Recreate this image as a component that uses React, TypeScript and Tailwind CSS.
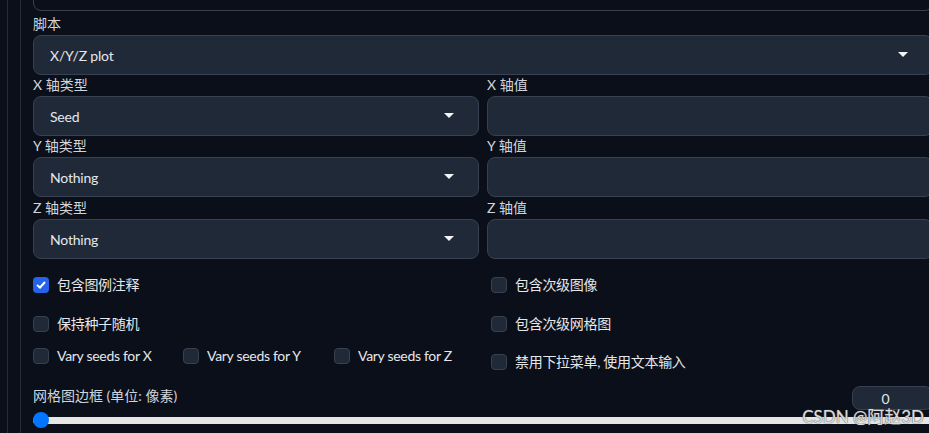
import React from "react";

const font = { fontFamily: '"Lato", "Noto Sans CJK SC", sans-serif' };

function Caret() {
  return (
    <svg width="10" height="6" viewBox="0 0 10 6" className="shrink-0">
      <path d="M0 0 L10 0 L5 5 Z" fill="#f3f4f6" />
    </svg>
  );
}

function Dropdown({ value }: { value: string }) {
  return (
    <div className="flex h-[40px] items-center justify-between rounded-lg border border-[#374151] bg-[#1f2937] pl-4 pr-[24px] text-[14px] tracking-[-0.2px] text-[#e5e7eb]">
      <span>{value}</span>
      <Caret />
    </div>
  );
}

function Label({ children }: { children: React.ReactNode }) {
  return <div className="h-[21px] text-[14px] leading-[20px] text-[#d1d5db]">{children}</div>;
}

function Check({ label, checked = false }: { label: string; checked?: boolean }) {
  return (
    <div className="flex items-center gap-2 text-[14px] tracking-[-0.3px] text-[#e5e7eb]">
      {checked ? (
        <span className="flex h-4 w-4 shrink-0 items-center justify-center rounded bg-[#2563eb]">
          <svg width="10" height="8" viewBox="0 0 10 8">
            <path d="M1 4 L4 6.5 L9 1" stroke="white" strokeWidth="2" fill="none" />
          </svg>
        </span>
      ) : (
        <span className="h-4 w-4 shrink-0 rounded border border-[#374151] bg-[#1f2937]" />
      )}
      <span>{label}</span>
    </div>
  );
}

export default function App() {
  return (
    <div className="relative h-[433px] w-[929px] overflow-hidden bg-[#0b0f19]" style={font}>
      <div className="flex h-full">
        {/* gutter lines */}
        <div className="ml-[7px] h-full w-px shrink-0 bg-[#262b36]" />
        <div className="ml-[12px] h-full w-px shrink-0 bg-[#262b36]" />

        <div className="ml-[12px] w-[900px] shrink-0">
          {/* previous field, mostly scrolled out */}
          <div className="-mt-[30px] h-[41px] rounded-lg border border-[#374151] bg-[#0b0f19]" />

          <div className="mt-[3px]">
            <Label>脚本</Label>
            <Dropdown value="X/Y/Z plot" />
          </div>

          <div className="grid grid-cols-2 gap-x-2">
            {(["X", "Y", "Z"] as const).map((axis, i) => (
              <React.Fragment key={axis}>
                <div className={i === 2 ? "mt-[1px]" : ""}>
                  <Label>{axis} 轴类型</Label>
                  <Dropdown value={i === 0 ? "Seed" : "Nothing"} />
                </div>
                <div className={i === 2 ? "mt-[1px]" : ""}>
                  <Label>{axis} 轴值</Label>
                  <div className="h-[40px] rounded-lg border border-[#374151] bg-[#1f2937]" />
                </div>
              </React.Fragment>
            ))}
          </div>

          {/* options */}
          <div className="mt-[15px] grid grid-cols-2 gap-x-2">
            <div className="flex flex-col">
              <Check label="包含图例注释" checked />
              <div className="mt-[18px]">
                <Check label="保持种子随机" />
              </div>
              <div className="mt-[11px] flex">
                <div className="w-[150px]"><Check label="Vary seeds for X" /></div>
                <div className="w-[151px]"><Check label="Vary seeds for Y" /></div>
                <Check label="Vary seeds for Z" />
              </div>
            </div>
            <div className="flex flex-col pl-[4px]">
              <Check label="包含次级图像" />
              <div className="mt-[18px]">
                <Check label="包含次级网格图" />
              </div>
              <div className="mt-[17px]">
                <Check label="禁用下拉菜单, 使用文本输入" />
              </div>
            </div>
          </div>

          {/* slider */}
          <div className="mt-[14px] flex items-start justify-between">
            <div className="text-[14px] leading-[20px] text-[#d1d5db]">网格图边框 (单位: 像素)</div>
            <div className="flex h-[24px] w-[81px] items-center justify-center rounded-lg border border-[#374151] bg-[#1f2937] pr-[14px] text-[14px] text-[#e5e7eb]">
              0
            </div>
          </div>
          <div className="relative mt-[7px] h-[7px] rounded-full bg-[#e6e6e6]">
            <div className="absolute -top-[5px] left-0 h-4 w-4 rounded-full bg-[#0075ff]" />
          </div>
        </div>
      </div>

      {/* watermark */}
      <div
        className="absolute right-[5px] top-[404px] text-[17px] text-white/80"
        style={{ textShadow: "0 0 1px #555, 0 0 1px #555" }}
      >
        CSDN @阿赵3D
      </div>
    </div>
  );
}
